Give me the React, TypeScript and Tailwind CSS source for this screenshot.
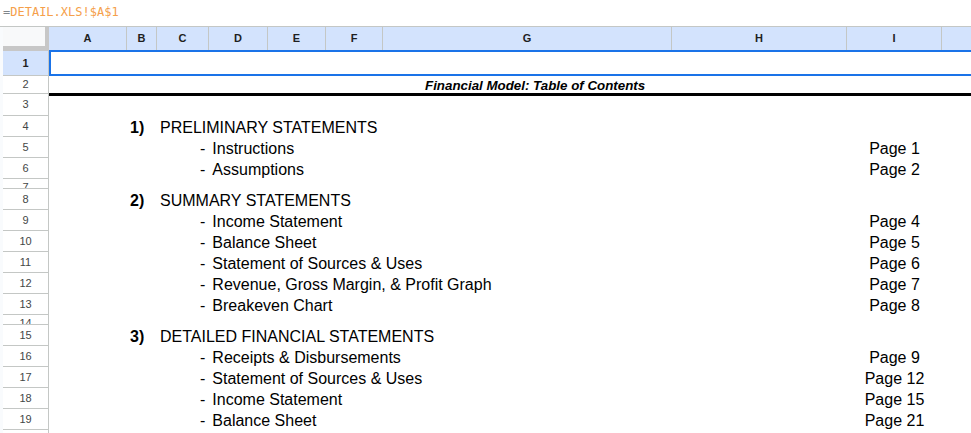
import React from "react";

type Row =
  | { n: number; h: string; kind: "blank" }
  | { n: number; h: string; kind: "title"; text: string }
  | { n: number; h: string; kind: "section"; num: string; text: string }
  | { n: number; h: string; kind: "item"; text: string; page: string };

const COLS = ["A", "B", "C", "D", "E", "F", "G", "H", "I", ""];
const GRID = "grid grid-cols-[78px_30px_52px_59px_58px_57px_289px_175px_95px_100px]";

const ROWS: Row[] = [
  { n: 1, h: "h-[25px]", kind: "blank" },
  { n: 2, h: "h-[18px]", kind: "title", text: "Financial Model: Table of Contents" },
  { n: 3, h: "h-[22px]", kind: "blank" },
  { n: 4, h: "h-[21px]", kind: "section", num: "1)", text: "PRELIMINARY STATEMENTS" },
  { n: 5, h: "h-[21px]", kind: "item", text: "Instructions", page: "Page 1" },
  { n: 6, h: "h-[21px]", kind: "item", text: "Assumptions", page: "Page 2" },
  { n: 7, h: "h-[10px]", kind: "blank" },
  { n: 8, h: "h-[21px]", kind: "section", num: "2)", text: "SUMMARY STATEMENTS" },
  { n: 9, h: "h-[21px]", kind: "item", text: "Income Statement", page: "Page 4" },
  { n: 10, h: "h-[21px]", kind: "item", text: "Balance Sheet", page: "Page 5" },
  { n: 11, h: "h-[21px]", kind: "item", text: "Statement of Sources & Uses", page: "Page 6" },
  { n: 12, h: "h-[21px]", kind: "item", text: "Revenue, Gross Margin, & Profit Graph", page: "Page 7" },
  { n: 13, h: "h-[21px]", kind: "item", text: "Breakeven Chart", page: "Page 8" },
  { n: 14, h: "h-[10px]", kind: "blank" },
  { n: 15, h: "h-[21px]", kind: "section", num: "3)", text: "DETAILED FINANCIAL STATEMENTS" },
  { n: 16, h: "h-[21px]", kind: "item", text: "Receipts & Disbursements", page: "Page 9" },
  { n: 17, h: "h-[21px]", kind: "item", text: "Statement of Sources & Uses", page: "Page 12" },
  { n: 18, h: "h-[21px]", kind: "item", text: "Income Statement", page: "Page 15" },
  { n: 19, h: "h-[21px]", kind: "item", text: "Balance Sheet", page: "Page 21" },
  { n: 20, h: "h-[21px]", kind: "blank" },
];

// body text sits on the bottom of the cell, as the sheet's default alignment does
const cell = "flex items-end whitespace-nowrap";

function RowHeader({ n, selected, short }: { n: number; selected: boolean; short: boolean }) {
  return (
    <div className="w-[49px] shrink-0 bg-[#f9fbfd] pl-[3px]">
      <div
        className={`flex h-full justify-center overflow-hidden border-r border-b border-[#c4c7c5] text-[11px] leading-[13px] ${
          short ? "items-start pt-[2px]" : "items-center"
        } ${selected ? "bg-[#d3e3fd] font-bold text-[#1f1f1f]" : "bg-white text-[#444746]"}`}
      >
        {n}
      </div>
    </div>
  );
}

function SheetRow({ row }: { row: Row }) {
  const body =
    row.n === 2 ? "border-b border-black" : row.n === 3 ? "border-t-2 border-black" : "";
  return (
    <div className={`flex ${row.h}`}>
      <RowHeader n={row.n} selected={row.n === 1} short={row.h === "h-[10px]"} />
      <div className={`${GRID} flex-1 ${body}`}>
        <div />
        <div className={`${cell} pl-[3px] font-bold`}>{row.kind === "section" ? row.num : null}</div>
        <div className={`${cell} ${row.kind === "item" ? "pl-[43px]" : "pl-[3px]"}`}>
          {row.kind === "section" ? row.text : null}
          {row.kind === "item" ? (
            <>
              <span>-</span>
              <span className="pl-[7px]">{row.text}</span>
            </>
          ) : null}
        </div>
        <div />
        <div />
        <div />
        <div
          className={`${cell} pl-[42px] text-[13.33px] leading-[15px] font-bold italic`}
        >
          {row.kind === "title" ? row.text : null}
        </div>
        <div />
        <div className={`${cell} justify-center`}>{row.kind === "item" ? row.page : null}</div>
        <div />
      </div>
    </div>
  );
}

export default function App() {
  return (
    <div className="relative h-[433px] w-[971px] overflow-hidden bg-white font-['Liberation_Sans',Arial,sans-serif] text-[16px] text-black">
      {/* formula bar */}
      <div className="flex h-[26px] items-start pt-[5px] pl-[3px] font-['DejaVu_Sans_Mono',monospace] text-[12px] leading-[14px]">
        <span className="text-[#80868b]">=</span>
        <span className="text-[#f5a04a]">DETAIL.XLS!$A$1</span>
      </div>

      {/* column headers */}
      <div className="flex h-[25px] border-t border-[#c4c7c5]">
        <div className="w-[49px] shrink-0 bg-[#f9fbfd] pl-[3px]">
          <div className="h-full border-r-4 border-b-[5px] border-[#c7c7c7] bg-[#f8f9fa]" />
        </div>
        <div className={`${GRID} flex-1`}>
          {COLS.map((c, i) => (
            <div
              key={i}
              className="flex items-center justify-center border-r border-b border-[#c4c7c5] bg-[#d3e3fd] text-[11px] font-bold text-[#1f1f1f]"
            >
              {c}
            </div>
          ))}
        </div>
      </div>

      {ROWS.map((r) => (
        <SheetRow key={r.n} row={r} />
      ))}

      {/* row 1 selection */}
      <div className="absolute top-[50px] left-[49px] -right-1 h-[26px] border-2 border-[#1a73e8]" />
    </div>
  );
}
